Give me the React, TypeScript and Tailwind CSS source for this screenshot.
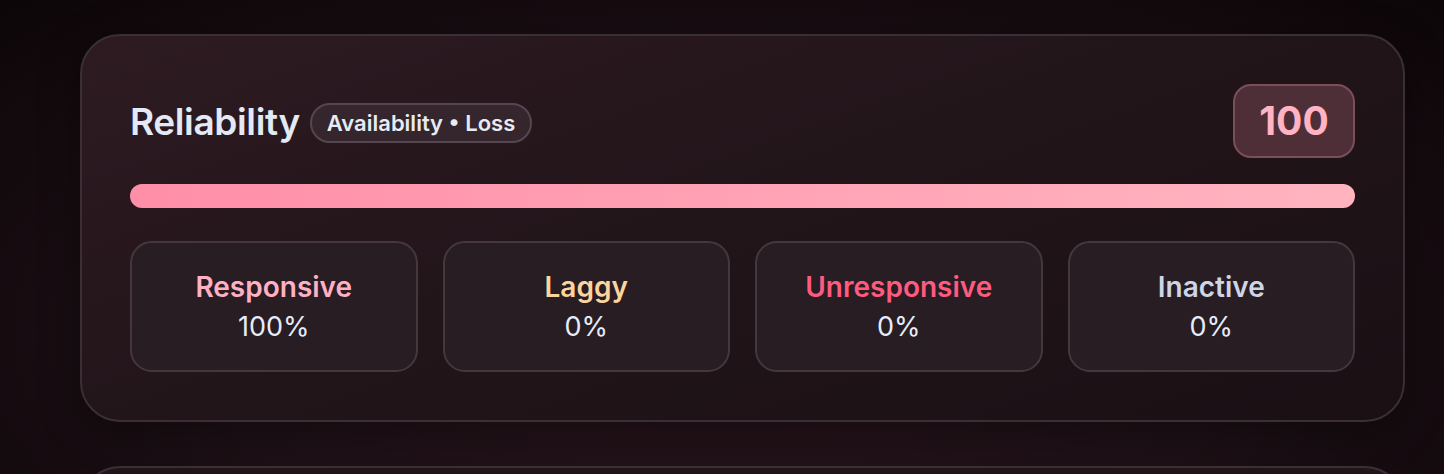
const stats = [
  { label: 'Responsive', value: '100%', color: 'text-[#ffb0c2]' },
  { label: 'Laggy', value: '0%', color: 'text-[#fdd49e]' },
  { label: 'Unresponsive', value: '0%', color: 'text-[#ff5a7f]' },
  { label: 'Inactive', value: '0%', color: 'text-[#cdd5e6]' },
];

export default function App() {
  return (
    <div
      className="relative h-[474px] w-[1444px] overflow-hidden bg-[radial-gradient(ellipse_at_50%_70%,#27131b_0%,#1d1016_50%,#0c0608_100%)] font-['Inter',sans-serif]"
    >
      <div className="ml-[80px] mt-[34px] w-[1325px] rounded-[40px] border-2 border-[#3b2f35] bg-[linear-gradient(160deg,#2e1b22_0%,#22151a_45%,#1a1014_100%)] p-12 shadow-[0_10px_40px_rgba(0,0,0,0.35)]">
        {/* header */}
        <div className="flex h-[74px] items-center justify-between">
          <div className="flex items-center gap-[10px]">
            <h1 className="text-[37px] font-semibold leading-none tracking-[-0.01em] text-[#e3e9f5]">
              Reliability
            </h1>
            <span className="mt-[4px] flex h-[40px] items-center rounded-full border-2 border-[#554650] bg-[#34262c] px-[15px] text-[22px] font-semibold text-[#e6ebf5]">
              Availability • Loss
            </span>
          </div>
          <div className="flex h-[74px] w-[122px] items-center justify-center rounded-[18px] border-2 border-[#7a4e5b] bg-[#4e2f38] text-[39px] font-bold text-[#ffb3c3]">
            100
          </div>
        </div>

        {/* bar */}
        <div className="mt-[26px] h-[24px] w-full rounded-full bg-[linear-gradient(90deg,#ff8ea8_0%,#ffa2b5_50%,#ffb4c0_100%)]" />

        {/* stat boxes */}
        <div className="mt-[33px] grid grid-cols-4 gap-[25px]">
          {stats.map((s) => (
            <div
              key={s.label}
              className="flex h-[131px] flex-col items-center justify-center rounded-[22px] border-2 border-[#45373e] bg-[#271d22]"
            >
              <div className={`text-[28px] font-semibold leading-[40px] ${s.color}`}>{s.label}</div>
              <div className="text-[27px] font-normal leading-[40px] text-[#e6ecfa]">{s.value}</div>
            </div>
          ))}
        </div>
      </div>

      {/* next card peeking in */}
      <div className="ml-[80px] mt-[44px] h-[60px] w-[1325px] rounded-t-[40px] border-2 border-b-0 border-[#3b2f35] bg-[#22151a]" />
    </div>
  );
}
